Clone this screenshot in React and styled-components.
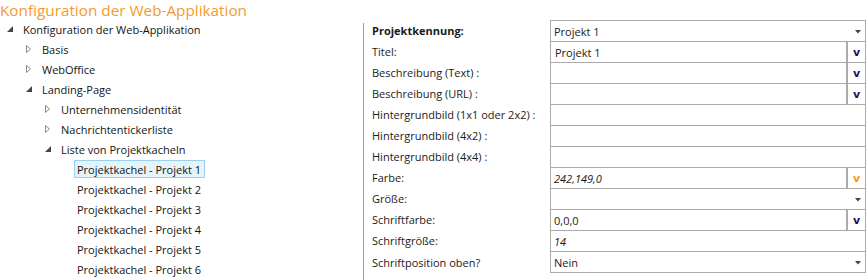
import styled, { createGlobalStyle } from "styled-components";

const GlobalStyle = createGlobalStyle`
  body {
    margin: 0;
    background: #ffffff;
    font-family: "Open Sans", "Noto Sans", sans-serif;
    color: #1b1b1b;
  }
`;

const tree = [
  { level: 0, label: "Konfiguration der Web-Applikation", state: "open" },
  { level: 1, label: "Basis", state: "closed" },
  { level: 1, label: "WebOffice", state: "closed" },
  { level: 1, label: "Landing-Page", state: "open" },
  { level: 2, label: "Unternehmensidentität", state: "closed" },
  { level: 2, label: "Nachrichtentickerliste", state: "closed" },
  { level: 2, label: "Liste von Projektkacheln", state: "open" },
  { level: 3, label: "Projektkachel - Projekt 1", selected: true },
  { level: 3, label: "Projektkachel - Projekt 2" },
  { level: 3, label: "Projektkachel - Projekt 3" },
  { level: 3, label: "Projektkachel - Projekt 4" },
  { level: 3, label: "Projektkachel - Projekt 5" },
  { level: 3, label: "Projektkachel - Projekt 6" },
];

const fields = [
  { label: "Projektkennung:", bold: true, value: "Projekt 1", kind: "select" },
  { label: "Titel:", value: "Projekt 1", kind: "button", shift: true },
  { label: "Beschreibung (Text) :", kind: "button" },
  { label: "Beschreibung (URL) :", kind: "button" },
  { label: "Hintergrundbild (1x1 oder 2x2) :" },
  { label: "Hintergrundbild (4x2) :" },
  { label: "Hintergrundbild (4x4) :" },
  { label: "Farbe:", value: "242,149,0", italic: true, kind: "button", accent: true },
  { label: "Größe:", kind: "select" },
  { label: "Schriftfarbe:", value: "0,0,0", kind: "button" },
  { label: "Schriftgröße:", value: "14", italic: true },
  { label: "Schriftposition oben?", value: "Nein", kind: "select" },
];

const Arrow = ({ state }) => {
  if (state === "open") {
    return (
      <ArrowBox>
        <svg width="16" height="20" viewBox="0 0 16 20">
          <polygon points="8,7 8,13 2,13" fill="#454545" />
        </svg>
      </ArrowBox>
    );
  }
  if (state === "closed") {
    return (
      <ArrowBox>
        <svg width="16" height="20" viewBox="0 0 16 20">
          <polygon
            points="2.5,6.5 2.5,13.5 6.5,10"
            fill="none"
            stroke="#8a8a8a"
            strokeWidth="1"
          />
        </svg>
      </ArrowBox>
    );
  }
  return <ArrowBox />;
};

const App = () => {
  return (
    <>
      <GlobalStyle />
      <Page>
        <LeftPane>
          <Title>Konfiguration der Web-Applikation</Title>
          <Tree>
            {tree.map((node) => (
              <TreeRow key={node.label} $level={node.level}>
                <Arrow state={node.state} />
                <NodeLabel $selected={node.selected}>{node.label}</NodeLabel>
              </TreeRow>
            ))}
          </Tree>
        </LeftPane>
        <Separator />
        <Form>
          {fields.map((f, i) => (
            <FieldRow key={f.label}>
              <Label $bold={f.bold}>{f.label}</Label>
              <ValueCell $last={i === fields.length - 1}>
                <ValueText $italic={f.italic} $shift={f.shift}>
                  {f.value}
                </ValueText>
                {f.kind === "select" && (
                  <DropArrow>
                    <svg width="6" height="4" viewBox="0 0 6 4">
                      <polygon points="0,0 6,0 3,3.5" fill="#444" />
                    </svg>
                  </DropArrow>
                )}
                {f.kind === "button" && <VButton $accent={f.accent}>v</VButton>}
              </ValueCell>
            </FieldRow>
          ))}
        </Form>
      </Page>
    </>
  );
};
export default App;

const Page = styled.div`
  display: flex;
  width: 868px;
  height: 280px;
  overflow: hidden;
`;

const LeftPane = styled.div`
  width: 363px;
  flex-shrink: 0;
  display: flex;
  flex-direction: column;
`;

const Title = styled.div`
  height: 19px;
  padding-top: 1px;
  box-sizing: border-box;
  line-height: 18px;
  font-size: 15.3px;
  color: #f39b30;
  white-space: nowrap;
`;

const Tree = styled.div`
  display: flex;
  flex-direction: column;
`;

const TreeRow = styled.div`
  display: flex;
  align-items: center;
  height: 20px;
  padding-left: ${(p) => 5 + p.$level * 19}px;
  font-size: 11px;
  white-space: nowrap;
`;

const ArrowBox = styled.span`
  display: flex;
  width: ${(p) => (p.children ? 16 : 13)}px;
  height: 20px;
  flex-shrink: 0;
`;

const NodeLabel = styled.span`
  display: flex;
  align-items: center;
  height: 18px;
  padding: 0 3px 0 2px;
  margin-left: -1px;
  border: 1px solid ${(p) => (p.$selected ? "#99d1f0" : "transparent")};
  background: ${(p) => (p.$selected ? "#e5f3fb" : "transparent")};
  color: #141414;
  box-sizing: border-box;
`;

const Separator = styled.div`
  width: 1px;
  margin-top: 23px;
  background: #a0a0a0;
  flex-shrink: 0;
`;

const Form = styled.div`
  display: flex;
  flex-direction: column;
  margin-top: 20px;
  flex: 1;
  padding-right: 2px;
`;

const FieldRow = styled.div`
  display: grid;
  grid-template-columns: 186px 316px;
  height: 21px;
`;

const Label = styled.div`
  display: flex;
  align-items: center;
  padding-left: 8px;
  font-size: 11px;
  font-weight: ${(p) => (p.$bold ? 700 : 400)};
  color: #1b1b1b;
  white-space: nowrap;
`;

const ValueCell = styled.div`
  display: flex;
  align-items: stretch;
  border: 1px solid #a9a9a9;
  border-bottom: ${(p) => (p.$last ? "1px solid #a9a9a9" : "none")};
  box-sizing: border-box;
  height: ${(p) => (p.$last ? 22 : 21)}px;
`;

const ValueText = styled.div`
  flex: 1;
  display: flex;
  align-items: center;
  padding-left: ${(p) => (p.$shift ? 4 : 3)}px;
  font-size: 11px;
  font-style: ${(p) => (p.$italic ? "italic" : "normal")};
  color: #1b1b1b;
`;

const DropArrow = styled.div`
  display: flex;
  align-items: center;
  padding: 2px 4px 0 0;
`;

const VButton = styled.div`
  width: 17px;
  display: flex;
  align-items: center;
  justify-content: center;
  border-left: 2px solid #acacac;
  font-family: "DejaVu Sans", sans-serif;
  font-weight: 700;
  font-size: 11px;
  color: ${(p) => (p.$accent ? "#f29a1c" : "#14145a")};
`;
